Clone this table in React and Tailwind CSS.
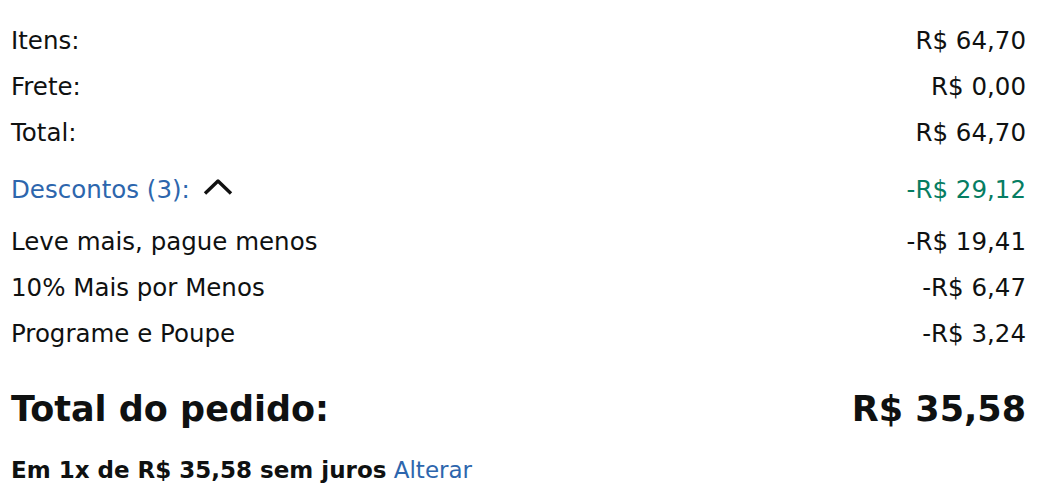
import React from "react";

const rows = [
  { label: "Itens:", value: "R$ 64,70" },
  { label: "Frete:", value: "R$ 0,00" },
  { label: "Total:", value: "R$ 64,70" },
];

const discounts = [
  { label: "Leve mais, pague menos", value: "-R$ 19,41" },
  { label: "10% Mais por Menos", value: "-R$ 6,47" },
  { label: "Programe e Poupe", value: "-R$ 3,24" },
];

const ChevronUp = () => (
  <svg width="30" height="20" viewBox="0 0 30 20" fill="none" className="-mt-[6px]">
    <path d="M2 16.5 L15 4 L28 16.5" stroke="#111" strokeWidth="3.4" strokeLinejoin="round" />
  </svg>
);

export default function App() {
  return (
    <div className="bg-white w-[1051px] h-[500px] pl-[11px] pr-[25px] pt-[18px] text-[#0f1111] font-['DejaVu_Sans',sans-serif]">
      {rows.map((r) => (
        <div key={r.label} className="flex justify-between items-center h-[46px] text-[24.5px]">
          <span>{r.label}</span>
          <span>{r.value}</span>
        </div>
      ))}

      <div className="flex justify-between items-center h-[58px] mt-[5px] text-[24.5px]">
        <span className="flex items-center gap-[13px]">
          <span className="text-[#2d66ad]">Descontos (3):</span>
          <ChevronUp />
        </span>
        <span className="text-[#067d62]">-R$ 29,12</span>
      </div>

      {discounts.map((d) => (
        <div key={d.label} className="flex justify-between items-center h-[46px] text-[24.5px]">
          <span>{d.label}</span>
          <span>{d.value}</span>
        </div>
      ))}

      <div className="flex justify-between items-center h-[60px] mt-[22px] text-[35px] font-bold">
        <span>Total do pedido:</span>
        <span>R$ 35,58</span>
      </div>

      <div className="mt-[16px] text-[23px] leading-[30px]">
        <span className="font-bold">Em 1x de R$ 35,58 sem juros</span>{" "}
        <span className="text-[#2d66ad]">Alterar</span>
      </div>
    </div>
  );
}
